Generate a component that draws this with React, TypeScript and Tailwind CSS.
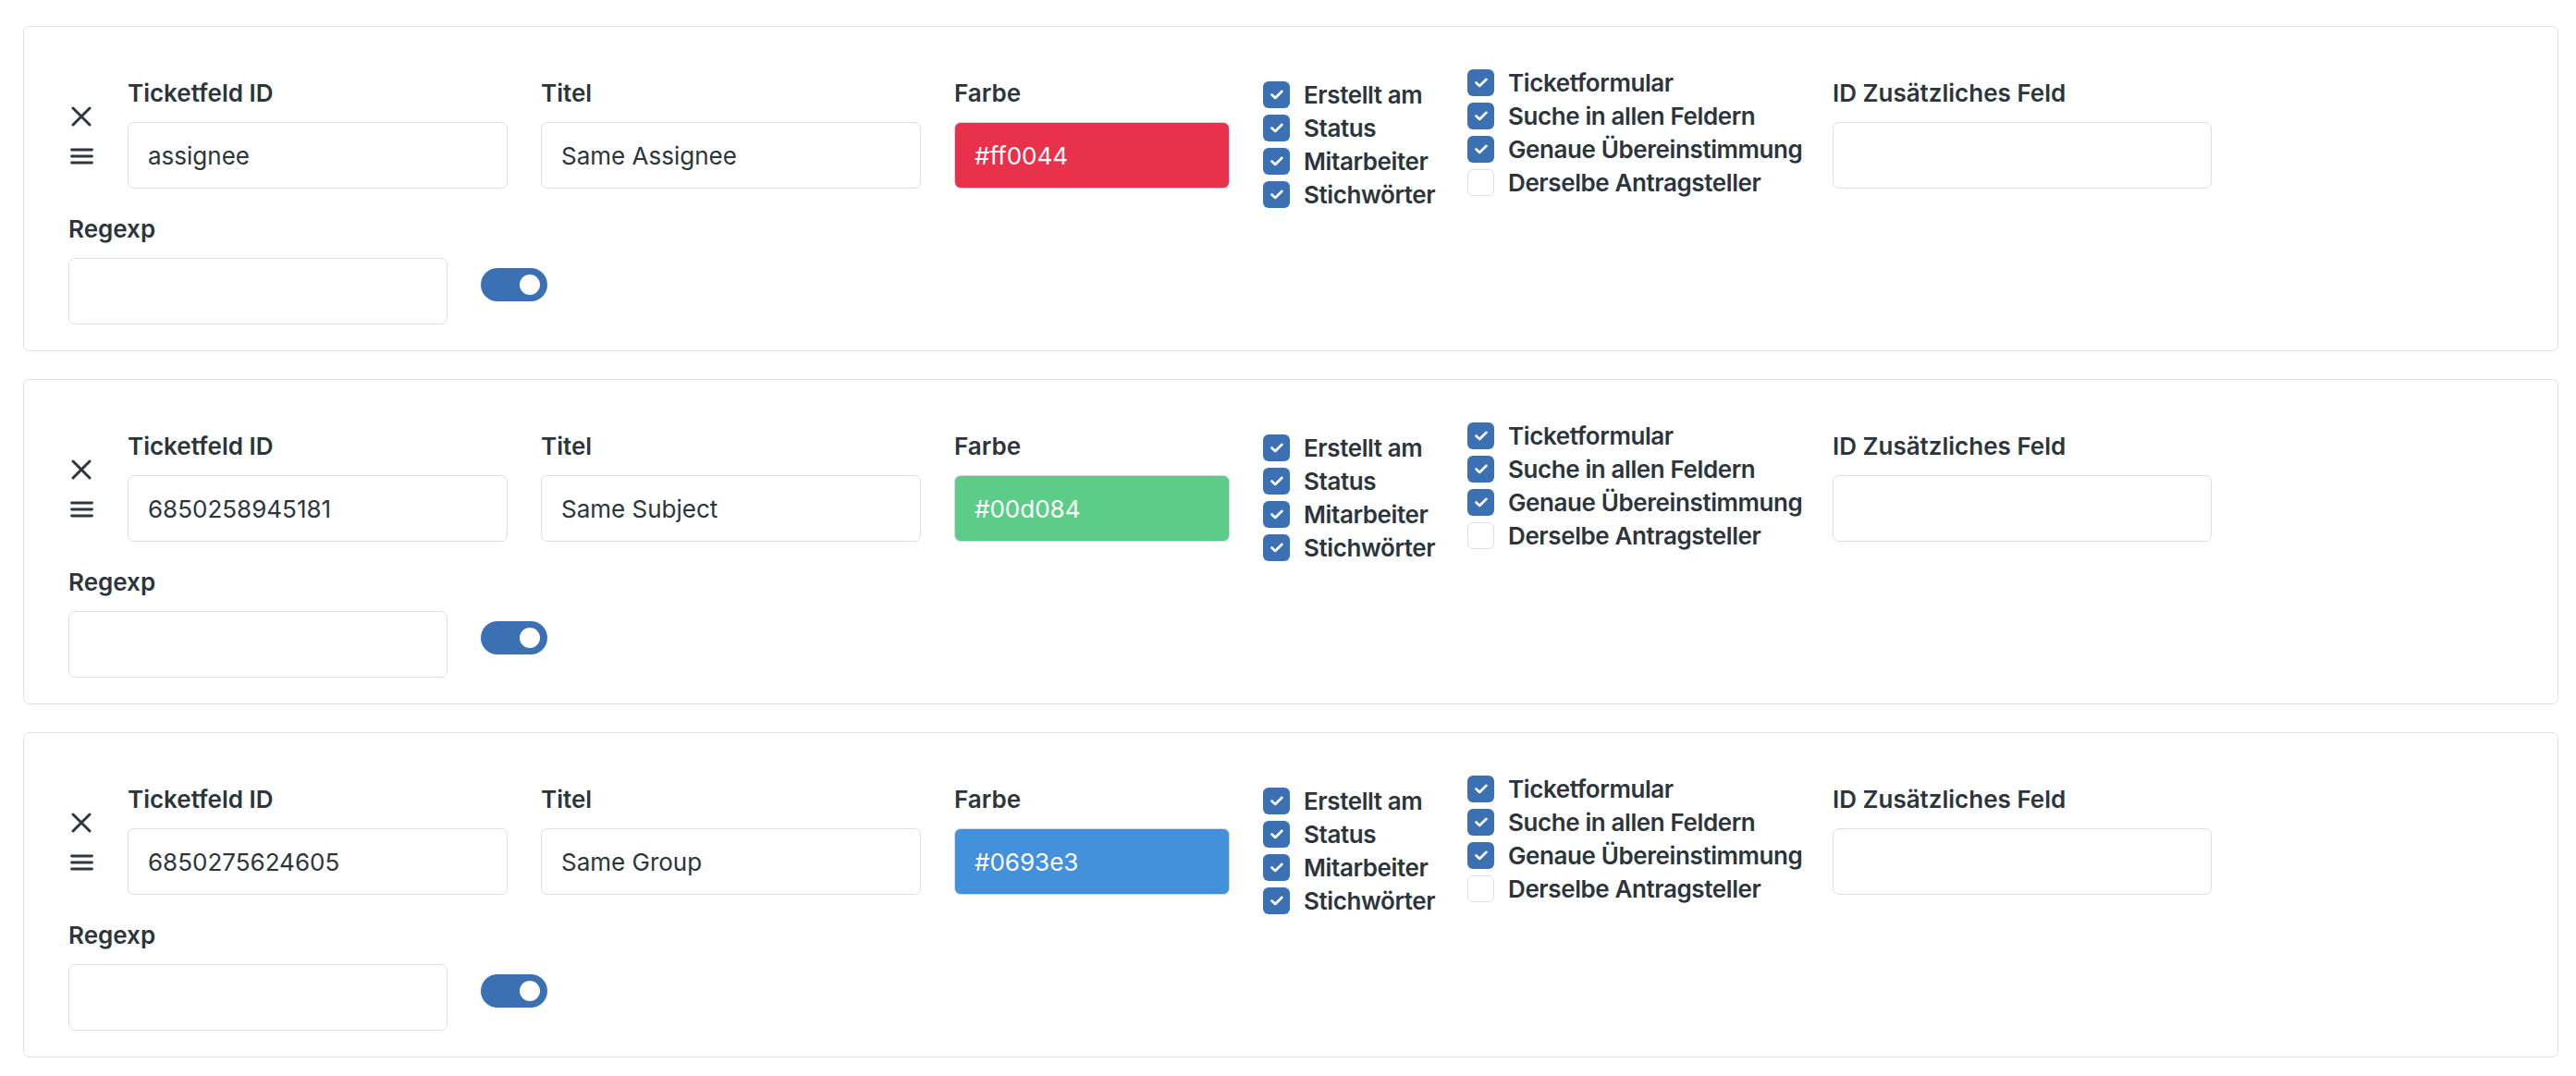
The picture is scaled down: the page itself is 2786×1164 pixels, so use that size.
import React from "react";

type Rule = {
  fieldId: string;
  title: string;
  color: string;
  swatch: string;
};

const rules: Rule[] = [
  { fieldId: "assignee", title: "Same Assignee", color: "#ff0044", swatch: "bg-[#e9314b]" },
  { fieldId: "6850258945181", title: "Same Subject", color: "#00d084", swatch: "bg-[#5ecc89]" },
  { fieldId: "6850275624605", title: "Same Group", color: "#0693e3", swatch: "bg-[#4391dc]" },
];

const leftChecks = [
  { label: "Erstellt am", checked: true },
  { label: "Status", checked: true },
  { label: "Mitarbeiter", checked: true },
  { label: "Stichwörter", checked: true },
];

const rightChecks = [
  { label: "Ticketformular", checked: true },
  { label: "Suche in allen Feldern", checked: true },
  { label: "Genaue Übereinstimmung", checked: true },
  { label: "Derselbe Antragsteller", checked: false },
];

const inputCls =
  "mt-[12px] h-[72px] rounded-[7px] border border-[#dcdfe3] bg-white px-[21px] text-[26px] text-[#2c343c] outline-none";

function Field({ label, value, width }: { label: string; value?: string; width: string }) {
  return (
    <div className={`flex flex-col ${width}`}>
      <label className="h-[39px] text-[26px] leading-[39px] font-semibold text-[#2c343c]">{label}</label>
      <input readOnly value={value ?? ""} className={inputCls} />
    </div>
  );
}

function Check({ label, checked }: { label: string; checked: boolean }) {
  return (
    <div className="flex h-[36px] items-center gap-[15px] whitespace-nowrap">
      {checked ? (
        <span className="flex h-[29px] w-[29px] shrink-0 items-center justify-center rounded-[6px] bg-[#3b70b3]">
          <svg width="14" height="11" viewBox="0 0 14 11" fill="none">
            <path d="M1.5 5.5 L5.2 9 L12.5 1.8" stroke="white" strokeWidth="2.6" strokeLinecap="round" strokeLinejoin="round" />
          </svg>
        </span>
      ) : (
        <span className="h-[29px] w-[29px] shrink-0 rounded-[6px] border border-[#dcdfe3] bg-white" />
      )}
      <span className="text-[26px] font-semibold tracking-[-0.4px] text-[#2c343c]">{label}</span>
    </div>
  );
}

function RuleCard({ rule }: { rule: Rule }) {
  return (
    <div className="h-[352px] rounded-[7px] border border-[#dfe2e6] bg-white pl-[48px] pt-[42px]">
      {/* first row: handle, ids, colour, match options */}
      <div className="flex items-start gap-[36px]">
        <div className="mt-[44px] flex w-[28px] flex-col items-center gap-[23px] text-[#2f3740]">
          <svg width="22" height="22" viewBox="0 0 22 22" fill="none">
            <path d="M2 2 L20 20 M20 2 L2 20" stroke="currentColor" strokeWidth="3" strokeLinecap="round" />
          </svg>
          <svg width="25" height="18" viewBox="0 0 25 18" fill="none">
            <path d="M1.5 2 H23.5 M1.5 9 H23.5 M1.5 16 H23.5" stroke="currentColor" strokeWidth="2.8" strokeLinecap="round" />
          </svg>
        </div>
        <div className="mt-[10px]">
          <Field label="Ticketfeld ID" value={rule.fieldId} width="w-[411px]" />
        </div>
        <div className="mt-[10px]">
          <Field label="Titel" value={rule.title} width="w-[411px]" />
        </div>
        <div className="mt-[10px] flex w-[298px] flex-col">
          <label className="h-[39px] text-[26px] leading-[39px] font-semibold text-[#2c343c]">Farbe</label>
          <input
            readOnly
            value={rule.color}
            className={`mt-[12px] h-[72px] rounded-[7px] border border-[#d4d8dc] px-[21px] text-[26px] text-white outline-none ${rule.swatch}`}
          />
        </div>
        <div className="mt-[13px] flex w-[185px] flex-col">
          {leftChecks.map((c) => (
            <Check key={c.label} {...c} />
          ))}
        </div>
        <div className="flex w-[359px] flex-col">
          {rightChecks.map((c) => (
            <Check key={c.label} {...c} />
          ))}
        </div>
        <div className="mt-[10px]">
          <Field label="ID Zusätzliches Feld" width="w-[410px]" />
        </div>
      </div>

      {/* second row: regexp + toggle */}
      <div className="flex items-start gap-[36px]">
        <Field label="Regexp" width="w-[410px]" />
        <div className="mt-[62px] flex h-[36px] w-[72px] items-center justify-end rounded-full bg-[#3b71b4] pr-[8px]">
          <span className="h-[22px] w-[22px] rounded-full bg-white" />
        </div>
      </div>
    </div>
  );
}

export default function App() {
  return (
    <div className="min-h-screen bg-white pt-[28px] pl-[25px] pr-[19px] font-['Inter','Liberation_Sans',sans-serif]">
      <div className="flex flex-col gap-[30px]">
        {rules.map((r) => (
          <RuleCard key={r.fieldId} rule={r} />
        ))}
      </div>
    </div>
  );
}
